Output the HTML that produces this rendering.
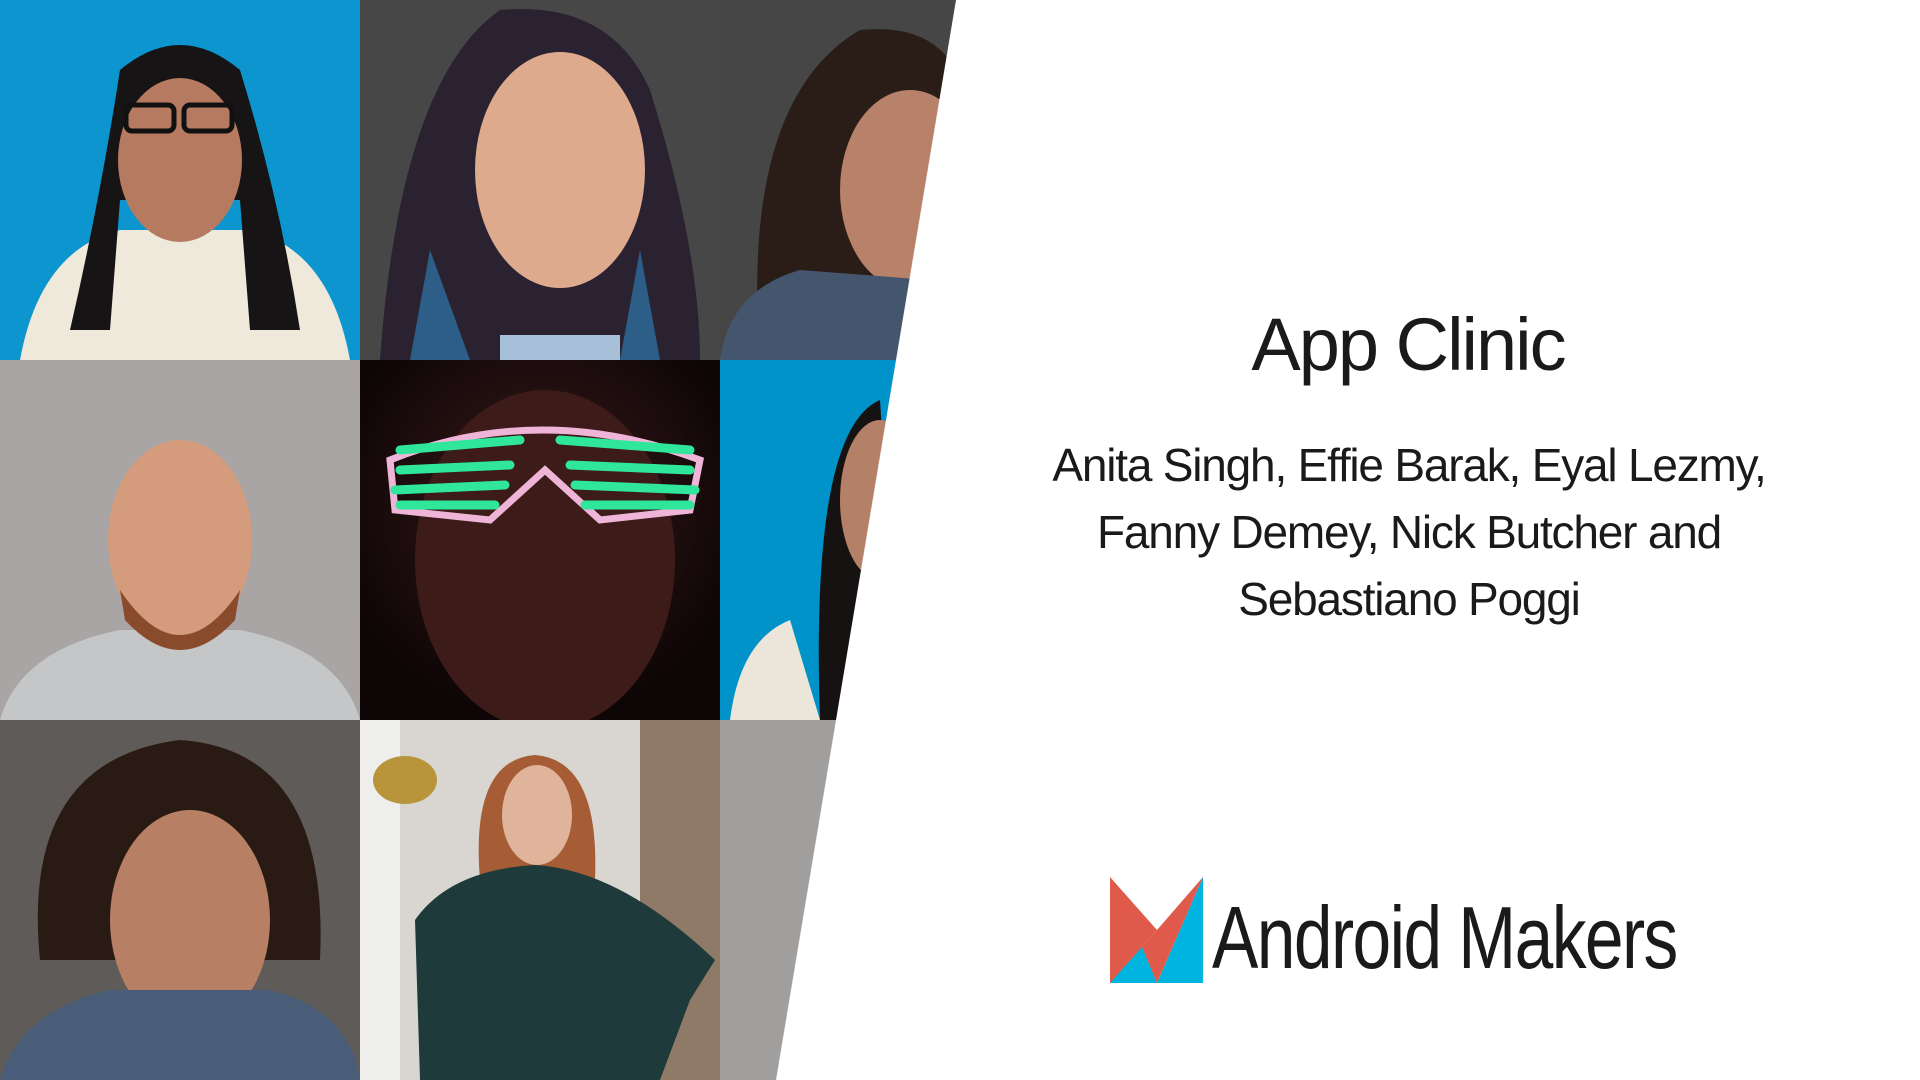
<!DOCTYPE html>
<html><head><meta charset="utf-8"><style>
html,body{margin:0;padding:0;width:1920px;height:1080px;overflow:hidden;background:#fff}
.t{position:absolute;font-family:"Liberation Sans",sans-serif;color:#111;text-align:center;font-weight:normal}
</style></head><body>
<svg width="1920" height="1080" style="position:absolute;left:0;top:0">
<defs>
<radialGradient id="g1" cx="50%" cy="40%" r="60%"><stop offset="0" stop-color="#3a1a1a"/><stop offset="1" stop-color="#0d0506"/></radialGradient>
</defs>
<rect x="0" y="0" width="360" height="360" fill="#0c95cf"/>
<path d="M20 360 Q40 250 120 230 L250 230 Q330 250 350 360Z" fill="#efe9dc"/>
<path d="M120 70 Q180 20 240 70 Q280 200 300 330 L250 330 L240 200 L120 200 L110 330 L70 330 Q100 200 120 70Z" fill="#161414"/>
<ellipse cx="180" cy="160" rx="62" ry="82" fill="#b57a5f"/>
<rect x="126" y="105" width="48" height="26" rx="6" fill="none" stroke="#111" stroke-width="5"/>
<rect x="184" y="105" width="48" height="26" rx="6" fill="none" stroke="#111" stroke-width="5"/>
<rect x="360" y="0" width="360" height="360" fill="#484747"/>
<path d="M380 360 Q400 80 500 10 Q610 0 650 90 Q700 250 700 360Z" fill="#2a2230"/>
<path d="M410 360 L430 250 L470 360Z M660 360 L640 250 L620 360Z" fill="#2d5e88"/>
<ellipse cx="560" cy="170" rx="85" ry="118" fill="#deaa8e"/>
<rect x="500" y="335" width="120" height="25" fill="#a8bfd9"/>
<rect x="720" y="0" width="260" height="360" fill="#474646"/>
<path d="M760 360 Q740 100 860 30 Q960 20 970 120 L970 360Z" fill="#2a1d17"/>
<ellipse cx="910" cy="190" rx="70" ry="100" fill="#b8826a"/>
<path d="M720 360 Q730 290 800 270 L930 280 L930 360Z" fill="#44566e"/>
<rect x="0" y="360" width="360" height="360" fill="#a9a5a5"/>
<path d="M0 720 Q20 650 120 630 L240 630 Q340 650 360 720Z" fill="#c4c6c8"/>
<ellipse cx="180" cy="540" rx="72" ry="100" fill="#d49b7c"/>
<path d="M120 590 Q180 680 240 590 L235 620 Q180 680 125 620Z" fill="#8a4b2c"/>
<rect x="360" y="360" width="360" height="360" fill="url(#g1)"/>
<ellipse cx="545" cy="560" rx="130" ry="170" fill="#3d1b18"/>
<path d="M390 460 Q540 400 700 460 L690 510 L600 520 L545 470 L490 520 L395 510Z" fill="none" stroke="#efb5d8" stroke-width="7"/>
<g stroke="#2fe69b" stroke-width="9" fill="none" stroke-linecap="round"><path d="M400 450 L520 440 M400 470 L510 465 M395 490 L505 485 M400 505 L495 505 M560 440 L690 450 M570 465 L690 470 M575 485 L695 490 M585 505 L690 505"/></g>
<rect x="720" y="360" width="260" height="360" fill="#0093c9"/>
<path d="M820 720 Q810 430 880 400 L900 720Z" fill="#161212"/>
<ellipse cx="880" cy="500" rx="40" ry="80" fill="#b58068"/>
<path d="M730 720 Q740 640 790 620 L820 720Z" fill="#ece6da"/>
<rect x="0" y="720" width="360" height="360" fill="#5e5b59"/>
<path d="M40 960 Q20 760 180 740 Q330 750 320 960Z" fill="#2a1a14"/>
<ellipse cx="190" cy="920" rx="80" ry="110" fill="#b78065"/>
<path d="M0 1080 Q20 1010 110 990 L270 990 Q350 1010 360 1080Z" fill="#4a5d78"/>
<rect x="360" y="720" width="360" height="360" fill="#d9d6d2"/>
<rect x="360" y="720" width="40" height="360" fill="#eeeeec"/>
<rect x="640" y="720" width="80" height="360" fill="#8f7a68"/>
<ellipse cx="405" cy="780" rx="32" ry="24" fill="#b8943a"/>
<path d="M480 880 Q470 760 535 755 Q600 760 595 880Z" fill="#a65c34"/>
<ellipse cx="537" cy="815" rx="35" ry="50" fill="#e0b49a"/>
<path d="M420 1080 L415 920 Q450 870 535 865 Q620 870 715 960 L690 1000 L660 1080Z" fill="#1e3a3a"/>
<rect x="720" y="720" width="260" height="360" fill="#a19f9e"/>
<polygon points="956,0 1920,0 1920,1080 776,1080" fill="#fff"/>
<polygon points="1110,877 1110,983 1157,983 1142,947" fill="#e05a4b"/>
<polygon points="1110,877 1157,930 1142,947 1110,983" fill="#e05a4b"/>
<polygon points="1203,877 1203,983 1157,983" fill="#00b4e0"/>
<polygon points="1110,983 1142,947 1157,983" fill="#00b4e0"/>
<polygon points="1203,877 1157,983 1142,947 1157,930" fill="#e05a4b"/>
</svg>
<div class="t" style="left:1108px;top:300px;width:600px;font-size:74px;line-height:90px;letter-spacing:-2px;color:#1a1a1a">App Clinic</div>
<div class="t" style="left:986px;top:432px;width:846px;font-size:46px;line-height:67px;letter-spacing:-1.2px;color:#1a1a1a">Anita Singh, Effie Barak, Eyal Lezmy,<br>Fanny Demey, Nick Butcher and<br>Sebastiano Poggi</div>
<div class="t" style="left:1212px;top:888px;font-size:88px;line-height:100px;text-align:left;letter-spacing:-2px;white-space:nowrap;transform:scaleX(0.79);transform-origin:0 0;color:#1a1a1a">Android Makers</div>
</body></html>
